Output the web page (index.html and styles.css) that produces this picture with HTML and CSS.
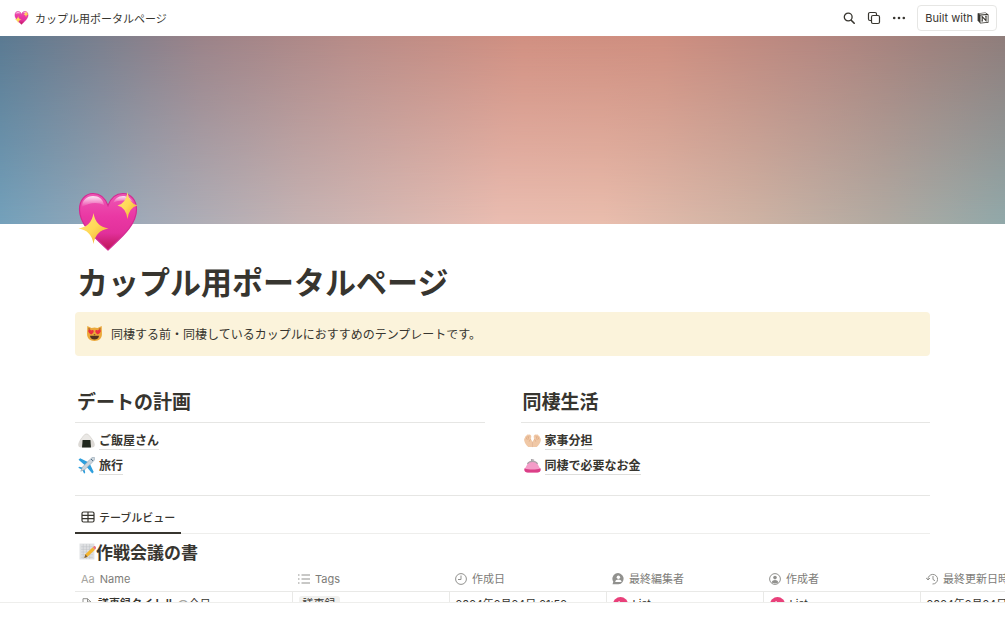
FILE: index.html
```html
<!doctype html>
<html lang="ja">
	<head>
		<meta charset="UTF-8" />
		<meta name="viewport" content="width=device-width, initial-scale=1" />
		<title>カップル用ポータルページ</title>
		<link rel="stylesheet" href="styles.css">
	</head>
	<body>
		<svg class="defs" aria-hidden="true">
			<defs>
				<linearGradient id="heart-fill" x1="0" y1="0" x2="0" y2="1">
					<stop offset="0" stop-color="#ee58b4" />
					<stop offset="0.4" stop-color="#ea38a4" />
					<stop offset="0.7" stop-color="#e2309b" />
					<stop offset="1" stop-color="#bd1457" />
				</linearGradient>
				<linearGradient id="shine" x1="0" y1="0" x2="0" y2="1">
					<stop offset="0" stop-color="#fff" stop-opacity="0.85" />
					<stop offset="1" stop-color="#fff" stop-opacity="0" />
				</linearGradient>
				<linearGradient id="star-fill" x1="0" y1="0" x2="1" y2="1">
					<stop offset="0" stop-color="#ffe27a" />
					<stop offset="0.5" stop-color="#ffd957" />
					<stop offset="1" stop-color="#eda32c" />
				</linearGradient>
				<symbol id="heart" viewBox="0 0 60 60">
					<path d="M30 58C19 47 1.500 34 1.500 17.500 1.500 8 7.500 1.500 15 1.500c7 0 12 4 15 12 3-8 8-12 15-12 7.500 0 13.500 6.500 13.500 16C58.500 34 41 47 30 58z" fill="url(#heart-fill)" stroke="#d32a92" stroke-width="1.200" />
					<path d="M4 15C4 8 9 4 15 4s10 3 11 9c-6-3-14-3-22 2z" fill="url(#shine)" />
					<path d="M35 11c2-4 5-7 10-7 4 0 8 2 10 6-7-2-14-2-20 1z" fill="url(#shine)" />
					<path d="M15.500 21q2 13.500 15 15.500-13 2-15 15.500-2-13.500-15-15.500 13-2 15-15.500z" fill="url(#star-fill)" />
					<path d="M49.500 0q1.500 11.500 10 13.500-8.500 2-10 13.500-1.500-11.500-10-13.500 8.500-2 10-13.500z" fill="url(#star-fill)" />
				</symbol>
				<symbol id="avatar" viewBox="0 0 16 16">
					<circle cx="8" cy="8" r="8" fill="#e9407a" />
					<path d="M6.500 4.500v7h4" fill="none" stroke="#fff" stroke-width="1.500" />
				</symbol>
			</defs>
		</svg>

		<header class="topbar">
			<a class="crumb" href="#top">
				<svg class="crumb-icon"><use href="#heart" /></svg>
				カップル用ポータルページ
			</a>
			<div class="actions">
				<button class="icon-btn" aria-label="検索">
					<svg viewBox="0 0 14 14" fill="none" stroke="currentColor">
						<circle cx="6.200" cy="6" r="3.900" stroke-width="1.300" />
						<path d="M9.200 9.200l3 3" stroke-width="1.600" stroke-linecap="round" />
					</svg>
				</button>
				<button class="icon-btn" aria-label="複製">
					<svg viewBox="0 0 14 14" fill="none" stroke="currentColor" stroke-width="1.200">
						<path d="M4 9.500H3A1.500 1.500 0 0 1 1.500 8V3A1.500 1.500 0 0 1 3 1.500h5A1.500 1.500 0 0 1 9.500 3v1" />
						<rect x="4.500" y="4.500" width="8" height="8" rx="1.500" />
					</svg>
				</button>
				<button class="icon-btn" aria-label="その他">
					<svg viewBox="0 0 14 14" fill="currentColor">
						<circle cx="2.200" cy="7" r="1.300" />
						<circle cx="7" cy="7" r="1.300" />
						<circle cx="11.800" cy="7" r="1.300" />
					</svg>
				</button>
				<button class="built">
					Built with
					<svg viewBox="0 0 12 12">
						<path d="M.6 1.200L8.500.5l3 2v8.300l-8.300.7L.6 8.600z" fill="#37352f" />
						<path d="M1.600 1.700l6.700-.6 1.300.8-6.500.5z" fill="#fff" />
						<path d="M3.500 3.400l7.200-.5v7.200l-7.200.6z" fill="#fff" />
						<path d="M5.200 9V4.700L9 8.600V4.200M4.500 4.700h1M8.200 4.200h1.500M4.400 9h1.500" fill="none" stroke="#37352f" stroke-width="1.100" />
					</svg>
				</button>
			</div>
		</header>

		<main class="page" id="top">
			<div class="cover"></div>
			<div class="content">
				<svg class="page-icon"><use href="#heart" /></svg>
				<h1>カップル用ポータルページ</h1>

				<div class="callout">
					<svg class="emoji" viewBox="0 0 16 16">
						<path d="M1.200 1l4 1.800Q8 2 10.800 2.800l4-1.800.2 7.500C15 13 12 15 8 15S1 13 1 8.500z" fill="#eba83a" />
						<path d="M2.200 2.500l2 1-1.700 2zM13.800 2.500l-2 1 1.700 2z" fill="#b06b2d" />
						<path d="M5 9C2.500 7.500 1.800 6.300 2.200 5.200c.5-1.200 2-1.200 2.600 0 .9-1 2.400-.7 2.500.5C7.300 7 6.300 8.200 5 9zM11 9c2.500-1.500 3.200-2.700 2.800-3.800-.5-1.200-2-1.200-2.600 0-.9-1-2.400-.7-2.500.5C8.700 7 9.700 8.200 11 9z" fill="#ea2f3f" />
						<path d="M3.800 10.200h8.400c0 2.300-1.700 3.500-4.200 3.500s-4.200-1.200-4.200-3.500z" fill="#54321f" />
						<path d="M7 8.800h2L8 9.800z" fill="#7a4425" />
					</svg>
					<p>同棲する前・同棲しているカップルにおすすめのテンプレートです。</p>
				</div>

				<div class="columns">
					<section>
						<h2>デートの計画</h2>
						<ul class="links">
							<li>
								<svg class="emoji" viewBox="0 0 16 16">
									<path d="M8 1.500C10.500 1.500 15.800 9 15.800 12c0 2-1.300 2.500-2.800 2.500H3C1.500 14.500.2 14 .2 12c0-3 5.300-10.500 7.800-10.500z" fill="#dcd9d5" />
									<path d="M8 2.300c2 0 4 3 5.500 5.700H2.500C4 5.300 6 2.300 8 2.300z" fill="#eae8e5" />
									<path d="M4.300 7.500h7.400l.5 7H3.800z" fill="#20271d" />
								</svg>
								<a href="#">ご飯屋さん</a>
							</li>
							<li>
								<svg class="emoji" viewBox="0 0 16 16">
									<path d="M9.800 5L2 1.200.5 2.600l6 5.200zM11 6.200L14.800 14l-1.400 1.500-5.200-6zM5 10L1.300 9.200l-1.100 1L4 12zM6 11l.8 3.700-1 1L4 12z" fill="#2e9fdd" />
									<path d="M15.500.5C14 0 12.800.7 11.500 2L4.200 9.500 2.600 13.400 6.500 11.800 14 4.500C15.300 3.200 16 2 15.500.5z" fill="#cbd5dd" stroke="#8499a8" stroke-width="0.500" />
									<path d="M12.300 1.900l1.800 1.800" stroke="#31536d" stroke-width="0.800" />
								</svg>
								<a href="#">旅行</a>
							</li>
						</ul>
					</section>
					<section>
						<h2>同棲生活</h2>
						<ul class="links">
							<li>
								<svg class="emoji" viewBox="0 0 16 16">
									<path id="palm" d="M7.800 9.500C7.600 8.200 7.300 7.500 6.300 6.500 6.800 5.200 7.200 4 6.600 3.200 6 2.300 5 2.200 4.400 2.600 3.700 2 2.700 2.500 2.200 3.500 1.300 3.800.9 4.700.8 5.600 0 6.200 0 7.300.3 8.500c.5 2.300 2 4.200 3.700 5.700h3.800z" fill="#f0c8a6" />
									<use href="#palm" transform="matrix(-1 0 0 1 16 0)" />
									<path d="M2 7l1.200-3M3.500 7.500l1.300-4M14 7l-1.200-3M12.500 7.500l-1.300-4M5 9c.3-1 .7-1.800 1.300-2.500M11 9c-.3-1-.7-1.800-1.300-2.500M8 9v5.200" fill="none" stroke="#d9a27c" stroke-width="0.600" />
								</svg>
								<a href="#">家事分担</a>
							</li>
							<li>
								<svg class="emoji" viewBox="0 0 16 16">
									<path d="M3.500 6C5 2.800 11 2.800 12.500 6l3 5.500c.5 2-1 3-3 3h-9c-2 0-3.500-1-3-3z" fill="#f49cc8" />
									<path d="M.5 10.500c4 1.800 11 1.800 15 0 .7 2.800-.9 4-3 4h-9c-2.100 0-3.700-1.200-3-4z" fill="#db3f87" />
									<path d="M3.200 6.500C5 3.300 11 3.300 12.800 6.500" fill="none" stroke="#aaa2a8" />
									<circle cx="7.400" cy="2.800" r="1" fill="#9b969b" />
									<circle cx="8.800" cy="3" r="0.900" fill="#bbb6ba" />
								</svg>
								<a href="#">同棲で必要なお金</a>
							</li>
						</ul>
					</section>
				</div>

				<section class="database">
					<div class="tabs">
						<button class="tab">
							<svg viewBox="0 0 14 12" fill="none" stroke="currentColor" stroke-width="1.200">
								<rect x="1" y="1" width="12" height="10" rx="1.500" />
								<path d="M1 4.300h12M1 7.600h12M7 1v10" />
							</svg>
							テーブルビュー
						</button>
					</div>
					<h3>
						<svg class="emoji" viewBox="0 0 16 16">
							<path d="M.5.500h14v15H.5z" fill="#dfe1e3" />
							<path d="M2 3.500h11M2 6h11M2 8.500h11M2 11h11M2 13.500h11M4 1v14M7 1v14M10 1v14" stroke="#bec2c6" stroke-width="0.500" />
							<path d="M5 14l1-3.500 7-6.500 2 2.300-7 6.700z" fill="#f4b52d" />
							<path d="M13 4l1-1c1-.6 2.600 1 1.800 2.300L15 6.300z" fill="#e77683" />
							<path d="M5 14l1-3.500L8 13z" fill="#7d6042" />
						</svg>作戦会議の書
					</h3>
					<table>
						<thead>
							<tr>
								<th class="name-col">
									<div class="cell"><span class="aa">Aa</span>Name</div>
								</th>
								<th>
									<div class="cell">
										<svg viewBox="0 0 12 12" stroke="currentColor"><path d="M0 2h1.500M0 6h1.500M0 10h1.500M3.500 2H12M3.500 6H12M3.500 10H12" /></svg>
										Tags
									</div>
								</th>
								<th>
									<div class="cell">
										<svg viewBox="0 0 12 12" fill="none" stroke="currentColor"><circle cx="6" cy="6" r="5.400" /><path d="M6 2.500V6.500H3" /></svg>
										作成日
									</div>
								</th>
								<th>
									<div class="cell">
										<svg viewBox="0 0 12 12" fill="none" stroke="currentColor">
											<path d="M.5 11.300l.8-2.500A5.600 5.600 0 1 1 6.500 11.300z" fill="currentColor" stroke="none" />
											<circle cx="6.400" cy="4.200" r="1.700" fill="#fff" stroke="none" />
											<path d="M3.200 9c.5-3.200 5.900-3.200 6.400 0z" fill="#fff" stroke="none" />
										</svg>
										最終編集者
									</div>
								</th>
								<th>
									<div class="cell">
										<svg viewBox="0 0 12 12" fill="none" stroke="currentColor">
											<circle cx="6" cy="6" r="5.400" />
											<circle cx="6" cy="4.600" r="1.800" fill="currentColor" stroke="none" />
											<path d="M2.700 9.200c.8-3 5.800-3 6.600 0-1.500 1.600-5.100 1.600-6.600 0z" fill="currentColor" stroke="none" />
										</svg>
										作成者
									</div>
								</th>
								<th>
									<div class="cell">
										<svg viewBox="0 0 12 12" fill="none" stroke="currentColor"><path d="M2 6.500A4.800 4.800 0 1 1 6.500 11M0 4.700l2 2.300 2-2M7 3v3.500l2 1.200" /></svg>
										最終更新日時
									</div>
								</th>
							</tr>
						</thead>
						<tbody>
							<tr>
								<td>
									<div class="cell">
										<svg viewBox="0 0 12 12" fill="none" stroke="currentColor"><path d="M2 .7h4.500L10 4v7.300H2zM6.500.7V4H10" /></svg>
										<strong>議事録タイトル <span class="mention">@</span><span class="today">今日</span></strong>
									</div>
								</td>
								<td><div class="cell"><span class="tag">議事録</span></div></td>
								<td><div class="cell">2024年2月24日 21:52</div></td>
								<td>
									<div class="cell person"><svg><use href="#avatar" /></svg>List</div>
								</td>
								<td>
									<div class="cell person"><svg><use href="#avatar" /></svg>List</div>
								</td>
								<td><div class="cell">2024年2月24日 21:52</div></td>
							</tr>
						</tbody>
					</table>
				</section>
			</div>
		</main>
	</body>
</html>
```
FILE: styles.css
```css
* {
	margin: 0;
	padding: 0;
	box-sizing: border-box;
}
body {
	display: flex;
	flex-direction: column;
	height: 100vh;
	padding-bottom: 25px;
	overflow: hidden;
	background: #fff;
	color: #37352f;
	font-family: Inter, "Noto Sans CJK JP", sans-serif;
	font-size: 12px;
}
a {
	color: inherit;
	text-decoration: none;
}
button {
	border: none;
	background: none;
	color: inherit;
	font: inherit;
	cursor: pointer;
}
.defs {
	position: absolute;
	width: 0;
	height: 0;
}

/* 上部バー */
.topbar {
	display: flex;
	flex: none;
	justify-content: space-between;
	align-items: center;
	height: 36px;
	padding: 0 8px 1px 14px;
	font-size: 11px;
}
.crumb {
	display: flex;
	align-items: center;
	gap: 6px;
}
.crumb-icon {
	width: 15px;
	height: 14px;
}
.actions {
	display: flex;
	align-items: center;
	gap: 11px;
}
.icon-btn {
	display: flex;
}
.icon-btn svg {
	width: 14px;
	height: 14px;
}
.built {
	display: flex;
	align-items: center;
	gap: 4px;
	height: 26px;
	padding: 0 7px;
	border: 1px solid #e6e6e4;
	border-radius: 4px;
}
.built svg {
	width: 12px;
	height: 12px;
}

/* ページ本体 */
.page {
	flex: 1;
	min-height: 0;
	overflow: hidden;
	border-bottom: 1px solid #eeeeec;
}
.cover {
	position: relative;
	height: 188px;
	background: linear-gradient(90deg, #5b7a92 0%, #7b7f8e 10%, #9b8389 20%, #b88c88 35%, #d19082 52%, #cf8f80 66%, #b68780 81%, #8f7d7b 100%);
}
.cover::after {
	content: "";
	position: absolute;
	inset: 0;
	background: linear-gradient(90deg, #74a1bb 0%, #a3abb8 15%, #c6b3b3 30%, #eabdb1 50%, #e9bdad 60%, #ceb3a4 75%, #b0aaa2 88%, #91a9aa 100%);
	mask-image: linear-gradient(transparent, #000);
}
.content {
	padding: 0 75px;
}
.page-icon {
	display: block;
	position: relative;
	width: 60px;
	height: 60px;
	margin: -32px 0 0 3px;
}
h1 {
	margin: 9px 2px 7px;
	font-size: 31px;
	line-height: 44px;
}
.callout {
	display: flex;
	align-items: center;
	gap: 8px;
	height: 44px;
	padding: 0 11px 2px;
	border-radius: 4px;
	background: #fbf3db;
}
.emoji {
	flex: none;
	width: 17px;
	height: 17px;
}
.columns {
	display: grid;
	grid-template-columns: 1fr 1fr;
	gap: 36px;
	margin-top: 30px;
	padding-bottom: 17px;
	border-bottom: 1px solid #e6e6e4;
}
h2 {
	padding: 0 2px 2px;
	border-bottom: 1px solid #e6e6e4;
	font-size: 19px;
	font-weight: 600;
	line-height: 34px;
}
.links {
	padding: 5px 3px 0;
	list-style: none;
}
.links li {
	display: flex;
	align-items: center;
	gap: 4px;
	height: 25px;
	font-weight: 600;
}
.links a {
	border-bottom: 1px solid #dededc;
	line-height: 17px;
}

/* テーブルビュー */
.tabs {
	display: flex;
	height: 38px;
	border-bottom: 1px solid #eeeeec;
}
.tab {
	display: flex;
	align-items: center;
	gap: 4px;
	margin-bottom: -1px;
	padding: 6px 6px 0;
	border-bottom: 2px solid #37352f;
	font-size: 11px;
	font-weight: 500;
}
.tab svg {
	width: 14px;
	height: 12px;
}
h3 {
	display: flex;
	align-items: center;
	height: 33px;
	padding: 2px 4px 0;
	font-size: 17px;
}
table {
	width: 1002px;
	border-collapse: collapse;
	table-layout: fixed;
	font-size: 11px;
}
th {
	width: 157px;
	height: 24px;
	border-bottom: 1px solid #e9e9e7;
	color: #7d7c78;
	font-weight: 400;
}
.name-col {
	width: 217px;
}
td {
	height: 26px;
	border-right: 1px solid #e9e9e7;
	border-bottom: 1px solid #e9e9e7;
}
.cell {
	display: flex;
	align-items: center;
	gap: 5px;
	padding: 0 6px;
	line-height: 16px;
	white-space: nowrap;
}
.cell svg {
	flex: none;
	width: 12px;
	height: 12px;
	color: #91918e;
}
.aa,
.mention {
	color: #a5a4a0;
}
.today {
	font-weight: 400;
}
.tag {
	padding: 0 4px;
	border-radius: 3px;
	background: #f1f1ef;
}
.person svg {
	width: 15px;
	height: 15px;
}
```
